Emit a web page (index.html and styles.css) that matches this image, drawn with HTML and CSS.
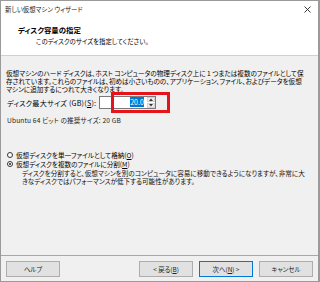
FILE: index.html
```html
<!DOCTYPE html>
<html lang="ja">
<head>
<meta charset="utf-8">
<link rel="stylesheet" href="styles.css">
</head>
<body>
<div class="win">
  <div class="head">
    <div class="titlebar">
      <span class="title">新しい仮想マシン ウィザード</span>
      <svg class="close" width="7" height="7" viewBox="0 0 7 7"><path d="M0.5 0.5L6.5 6.5M6.5 0.5L0.5 6.5" stroke="#222" stroke-width="0.9" fill="none"/></svg>
    </div>
    <div class="h1">ディスク容量の指定</div>
    <div class="h2">このディスクのサイズを指定してください。</div>
  </div>
  <div class="main">
    <p class="para">仮想マシンのハード ディスクは、ホスト コンピュータの物理ディスク上に 1 つまたは複数のファイルとして保<br>存されています。これらのファイルは、初めは小さいものの、アプリケーション、ファイル、およびデータを仮想<br>マシンに追加するにつれて大きくなります。</p>
    <div class="sizerow">
      <span class="lbl">ディスク最大サイズ (GB)(<u>S</u>):</span>
      <div class="spin">
        <span class="val"><span class="sel">20.0</span></span>
        <span class="arrows">
          <span class="arr"><svg width="4" height="3" viewBox="0 0 4 3"><path d="M0 3L2 0.5L4 3Z" fill="#333"/></svg></span>
          <span class="arr"><svg width="4" height="3" viewBox="0 0 4 3"><path d="M0 0L2 2.5L4 0Z" fill="#333"/></svg></span>
        </span>
      </div>
    </div>
    <div class="rec">Ubuntu 64 ビット の推奨サイズ: 20 GB</div>
    <div class="radio r1"><span class="dot"></span><span>仮想ディスクを単一ファイルとして格納(<u>O</u>)</span></div>
    <div class="radio r2"><span class="dot on"></span><span>仮想ディスクを複数のファイルに分割(<u>M</u>)</span></div>
    <p class="desc">ディスクを分割すると、仮想マシンを別のコンピュータに容易に移動できるようになりますが、非常に大<br>きなディスクではパフォーマンスが低下する可能性があります。</p>
  </div>
  <div class="foot">
    <button class="btn help">ヘルプ</button>
    <button class="btn">&lt; 戻る(<u>B</u>)</button>
    <button class="btn def">次へ(<u>N</u>) &gt;</button>
    <button class="btn">キャンセル</button>
  </div>
  <div class="redbox"></div>
</div>
</body>
</html>
```
FILE: styles.css
```css
* { box-sizing: border-box; }
html, body { margin: 0; padding: 0; }
body {
  width: 320px; height: 282px; overflow: hidden;
  font-family: "Noto Sans CJK JP", "Noto Sans", sans-serif;
  font-feature-settings: "palt" 1;
  color: #000;
  background: #fff;
}
.win {
  position: relative;
  width: 320px; height: 282px;
  border: 1px solid #9a9a9a;
  border-right-width: 2px;
  background: #f0f0f0;
  display: flex; flex-direction: column;
}
.head {
  height: 55px;
  background: #fff;
  border-bottom: 1px solid #d0d0d0;
  display: flex; flex-direction: column;
}
.titlebar {
  height: 17px;
  display: flex; align-items: center; justify-content: space-between;
  padding: 0 7px 0 4px;
}
.title { font-size: 6.4px; line-height: 17px; color: #222; }
.close { display: block; margin-top: -1px; }
.h1 {
  margin-top: 7px; padding-left: 17px;
  font-size: 7.4px; line-height: 10px; font-weight: bold;
}
.h2 {
  margin-top: 3px; padding-left: 35px;
  font-size: 6.4px; line-height: 8px;
}
.main {
  height: 199px;
  padding-left: 5px;
  display: flex; flex-direction: column;
  font-size: 6.6px;
}
.para { margin: 12.5px 0 0 0; line-height: 8px; white-space: nowrap; }
.sizerow {
  margin-top: 3px; height: 14px;
  display: flex; align-items: center;
  padding-left: 1px;
}
.lbl { line-height: 14px; font-size: 7.1px; letter-spacing: 0.25px; }
.spin {
  margin-left: 3px;
  width: 57px; height: 13px;
  background: #fff;
  border: 1px solid #7a7a7a;
  display: flex; align-items: center;
}
.val { flex: 1; text-align: right; padding-right: 3px; line-height: 9px; }
.sel { background: #0078d7; color: #fff; padding: 0 0.5px; font-size: 7px; }
.arrows { width: 8px; height: 11px; display: flex; flex-direction: column; gap: 1px; }
.arr {
  flex: 1; background: #ececec; border: 1px solid #d4d4d4;
  display: flex; align-items: center; justify-content: center;
}
.arr svg { display: block; }
.rec { margin-top: 6.5px; line-height: 8px; padding-left: 1px; color: #222; letter-spacing: 0.15px; }
.radio { display: flex; align-items: center; line-height: 8px; padding-left: 1px; }
.r1 { margin-top: 27px; }
.r2 { margin-top: 1px; }
.dot {
  width: 6px; height: 6px; border-radius: 50%;
  border: 1px solid #333; background: #fff;
  margin-right: 3px; position: relative; flex: none;
}
.dot.on::after {
  content: ""; position: absolute; left: 1px; top: 1px;
  width: 2px; height: 2px; border-radius: 50%; background: #222;
}
.desc { margin: 2px 0 0 16px; line-height: 7.5px; white-space: nowrap; color: #111; }
.foot {
  flex: 1;
  border-top: 1px solid #a8a8a8;
  display: flex; align-items: flex-start;
  padding: 5px 5px 0 5px;
  gap: 6px;
}
.btn {
  width: 54px; height: 16px;
  background: #e1e1e1;
  border: 1px solid #adadad;
  font-family: inherit; font-feature-settings: "palt" 1;
  font-size: 6.4px; color: #222;
  padding: 0; margin: 0;
}
.btn.help { margin-right: auto; }
.btn.def { border-color: #0078d7; }
.redbox {
  position: absolute; left: 110px; top: 91px;
  width: 59px; height: 21px;
  border: 3px solid #e5141b;
}
```
